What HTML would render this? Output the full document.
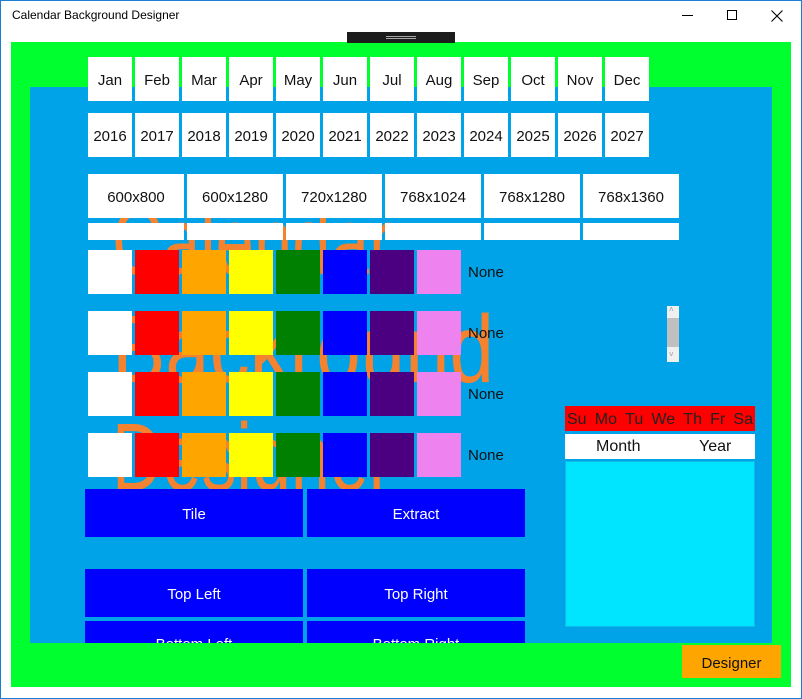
<!DOCTYPE html>
<html><head><meta charset="utf-8"><style>
*{margin:0;padding:0;box-sizing:border-box}
body{width:802px;height:699px;overflow:hidden;background:#fff;font-family:"Segoe UI","Liberation Sans",sans-serif;position:relative}
.a{position:absolute}
.title{left:12px;top:8px;font-size:12px;color:#000}
.w{background:#fff;display:flex;align-items:center;justify-content:center;font-size:15px;color:#111;padding-top:3px}
.b{background:#0000ff;color:#fff;display:flex;align-items:center;justify-content:center;font-size:15px;padding-top:3px}
.none{font-size:15px;color:#111}
</style></head><body>
<div class="a" style="left:0;top:0;width:802px;height:699px;border:1px solid #1a7fd4"></div>
<div class="a title">Calendar Background Designer</div>
<div class="a" style="left:682px;top:15px;width:11px;height:1px;background:#000"></div>
<div class="a" style="left:727px;top:10px;width:10px;height:10px;border:1px solid #000"></div>
<svg class="a" style="left:771px;top:10px" width="12" height="12"><path d="M0.5 0.5L11.5 11.5M11.5 0.5L0.5 11.5" stroke="#000" stroke-width="1.1"/></svg>
<div class="a" style="left:11px;top:42px;width:780px;height:645px;background:#00ff2f"></div>
<div class="a" style="left:347px;top:32px;width:108px;height:11px;background:#1c1c1c"></div>
<div class="a" style="left:386px;top:36px;width:30px;height:1px;background:#aaa"></div>
<div class="a" style="left:386px;top:38px;width:30px;height:1px;background:#aaa"></div>
<div class="a" style="left:30px;top:87px;width:742px;height:556px;background:#00a2e8;overflow:hidden"></div>
<svg class="a" style="left:0;top:0" width="802" height="699">
<g fill="#f5822e" font-family="Liberation Sans,sans-serif" font-size="96">
<text x="112" y="274" textLength="280" lengthAdjust="spacingAndGlyphs">Calendar</text>
<text x="112" y="382" textLength="382" lengthAdjust="spacingAndGlyphs">Backround</text>
<text x="112" y="490" textLength="280" lengthAdjust="spacingAndGlyphs">Designer</text>
</g></svg>
<div id="c"></div>
<div class="a" style="left:667px;top:306px;width:12px;height:56px;background:#f0f0f0"></div>
<div class="a" style="left:667px;top:318px;width:12px;height:29px;background:#c0c0c0"></div>
<div class="a" style="left:669px;top:305px;font-size:8px;color:#999">˄</div>
<div class="a" style="left:669px;top:350px;font-size:8px;color:#999">˅</div>
<div class="a" style="left:565px;top:406px;width:190px;height:25px;background:#ff0000;font-family:'Liberation Sans',sans-serif;font-size:16px;color:#222;display:flex;justify-content:space-between;align-items:center;padding:2px 2px 0">
<span>Su</span><span>Mo</span><span>Tu</span><span>We</span><span>Th</span><span>Fr</span><span>Sa</span></div>
<div class="a" style="left:565px;top:434px;width:190px;height:25px;background:#fff;font-family:'Liberation Sans',sans-serif;font-size:16px;color:#111"><span class="a" style="left:31px;top:4px">Month</span><span class="a" style="left:134px;top:4px">Year</span></div>
<div class="a" style="left:565px;top:461px;width:190px;height:166px;background:#00e5ff;border:1px solid #10b8e8"></div>
<div class="a b" style="left:85px;top:489px;width:218px;height:48px">Tile</div>
<div class="a b" style="left:307px;top:489px;width:218px;height:48px">Extract</div>
<div class="a b" style="left:85px;top:569px;width:218px;height:48px">Top Left</div>
<div class="a b" style="left:307px;top:569px;width:218px;height:48px">Top Right</div>
<div class="a" style="left:85px;top:621px;width:218px;height:22px;background:#00f;overflow:hidden;color:#fff;font-size:15px;text-align:center;padding-top:15px">Bottom Left</div>
<div class="a" style="left:307px;top:621px;width:218px;height:22px;background:#00f;overflow:hidden;color:#fff;font-size:15px;text-align:center;padding-top:15px">Bottom Right</div>
<div class="a" style="left:682px;top:645px;width:99px;height:33px;background:#ffa500;display:flex;align-items:center;justify-content:center;font-size:15px;color:#111;padding-top:3px">Designer</div>
<script>
var c=document.getElementById('c'),h='';
var m=['Jan','Feb','Mar','Apr','May','Jun','Jul','Aug','Sep','Oct','Nov','Dec'];
for(var i=0;i<12;i++){var x=88+i*47;
h+='<div class="a w" style="left:'+x+'px;top:57px;width:44px;height:44px">'+m[i]+'</div>';
h+='<div class="a w" style="left:'+x+'px;top:113px;width:44px;height:44px">'+(2016+i)+'</div>';}
var s=['600x800','600x1280','720x1280','768x1024','768x1280','768x1360'];
for(i=0;i<6;i++){var x=88+i*99;
h+='<div class="a w" style="left:'+x+'px;top:174px;width:96px;height:44px">'+s[i]+'</div>';
h+='<div class="a" style="left:'+x+'px;top:223px;width:96px;height:17px;background:#fff"></div>';}
var col=['#fff','#f00','#ffa500','#ff0','#008000','#00f','#4b0082','#ee82ee'];
for(var r=0;r<4;r++){var y=250+r*61;
for(i=0;i<8;i++)h+='<div class="a" style="left:'+(88+i*47)+'px;top:'+y+'px;width:44px;height:44px;background:'+col[i]+'"></div>';
h+='<div class="a none" style="left:468px;top:'+(y+14)+'px">None</div>';}
c.innerHTML=h;
</script>
</body></html>
